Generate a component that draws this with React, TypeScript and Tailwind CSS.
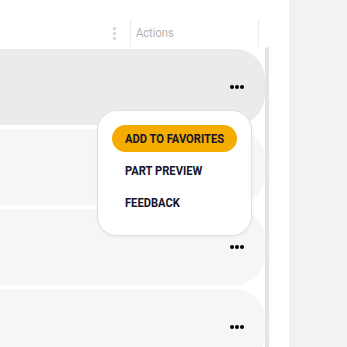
import React from 'react';

// Row menu options shown in the popover
const menuItems = ['ADD TO FAVORITES', 'PART PREVIEW', 'FEEDBACK'];

// Table rows (only the actions cell is visible in this crop)
const rows = [
  { id: 1, active: true },
  { id: 2, active: false },
  { id: 3, active: false },
  { id: 4, active: false },
];

const Dots = () => (
  <div className="flex gap-[1px]">
    <span className="w-[4px] h-[4px] rounded-full bg-black" />
    <span className="w-[4px] h-[4px] rounded-full bg-black" />
    <span className="w-[4px] h-[4px] rounded-full bg-black" />
  </div>
);

export default function App() {
  return (
    <div className="flex w-[347px] h-[347px] overflow-hidden bg-white font-['Roboto',sans-serif]">
      {/* Grid area */}
      <div className="relative w-[289px] shrink-0 pt-[19px]">
        {/* Header */}
        <div className="flex h-[28px]">
          <div className="w-[130px] flex items-center justify-end pr-[14px]">
            <div className="flex flex-col gap-[2px]">
              <span className="w-[3px] h-[3px] rounded-full bg-[#cfcfcf]" />
              <span className="w-[3px] h-[3px] rounded-full bg-[#cfcfcf]" />
              <span className="w-[3px] h-[3px] rounded-full bg-[#cfcfcf]" />
            </div>
          </div>
          <div className="w-[129px] border-l border-r border-[#ebebeb] flex items-center pl-[5px]">
            <span className="text-[12px] text-[#b3b3b3] origin-left scale-x-[0.93]">Actions</span>
          </div>
        </div>

        {/* Body */}
        <div className="flex h-[300px]">
          <div className="w-[265px] flex flex-col gap-[4px] pt-[2px]">
            {rows.map((row) => (
              <div
                key={row.id}
                className={`h-[76px] shrink-0 rounded-r-[30px] flex items-center justify-end pr-[21px] ${
                  row.active ? 'bg-[#ebebeb]' : 'bg-[#f6f6f6]'
                }`}
              >
                <Dots />
              </div>
            ))}
          </div>
          <div className="w-[4px] bg-[#e4e4e4] rounded-t-full" />
        </div>

        {/* Row menu popover */}
        <div className="absolute left-[97px] top-[110px] w-[155px] h-[126px] bg-white border border-[#dde0e6] rounded-[20px] shadow-[0_1px_3px_rgba(0,0,0,0.06)] px-[14px] pt-[14px] flex flex-col gap-[5px]">
          {menuItems.map((item, i) => (
            <div
              key={item}
              className={`h-[27px] rounded-full flex items-center pl-[13px] ${
                i === 0 ? 'bg-[#f5ac00]' : ''
              }`}
            >
              <span className="text-[12px] font-bold text-[#14142b] whitespace-nowrap origin-left scale-x-[0.93]">
                {item}
              </span>
            </div>
          ))}
        </div>
      </div>

      {/* Side panel */}
      <div className="flex-1 bg-[#f2f2f2]" />
    </div>
  );
}
